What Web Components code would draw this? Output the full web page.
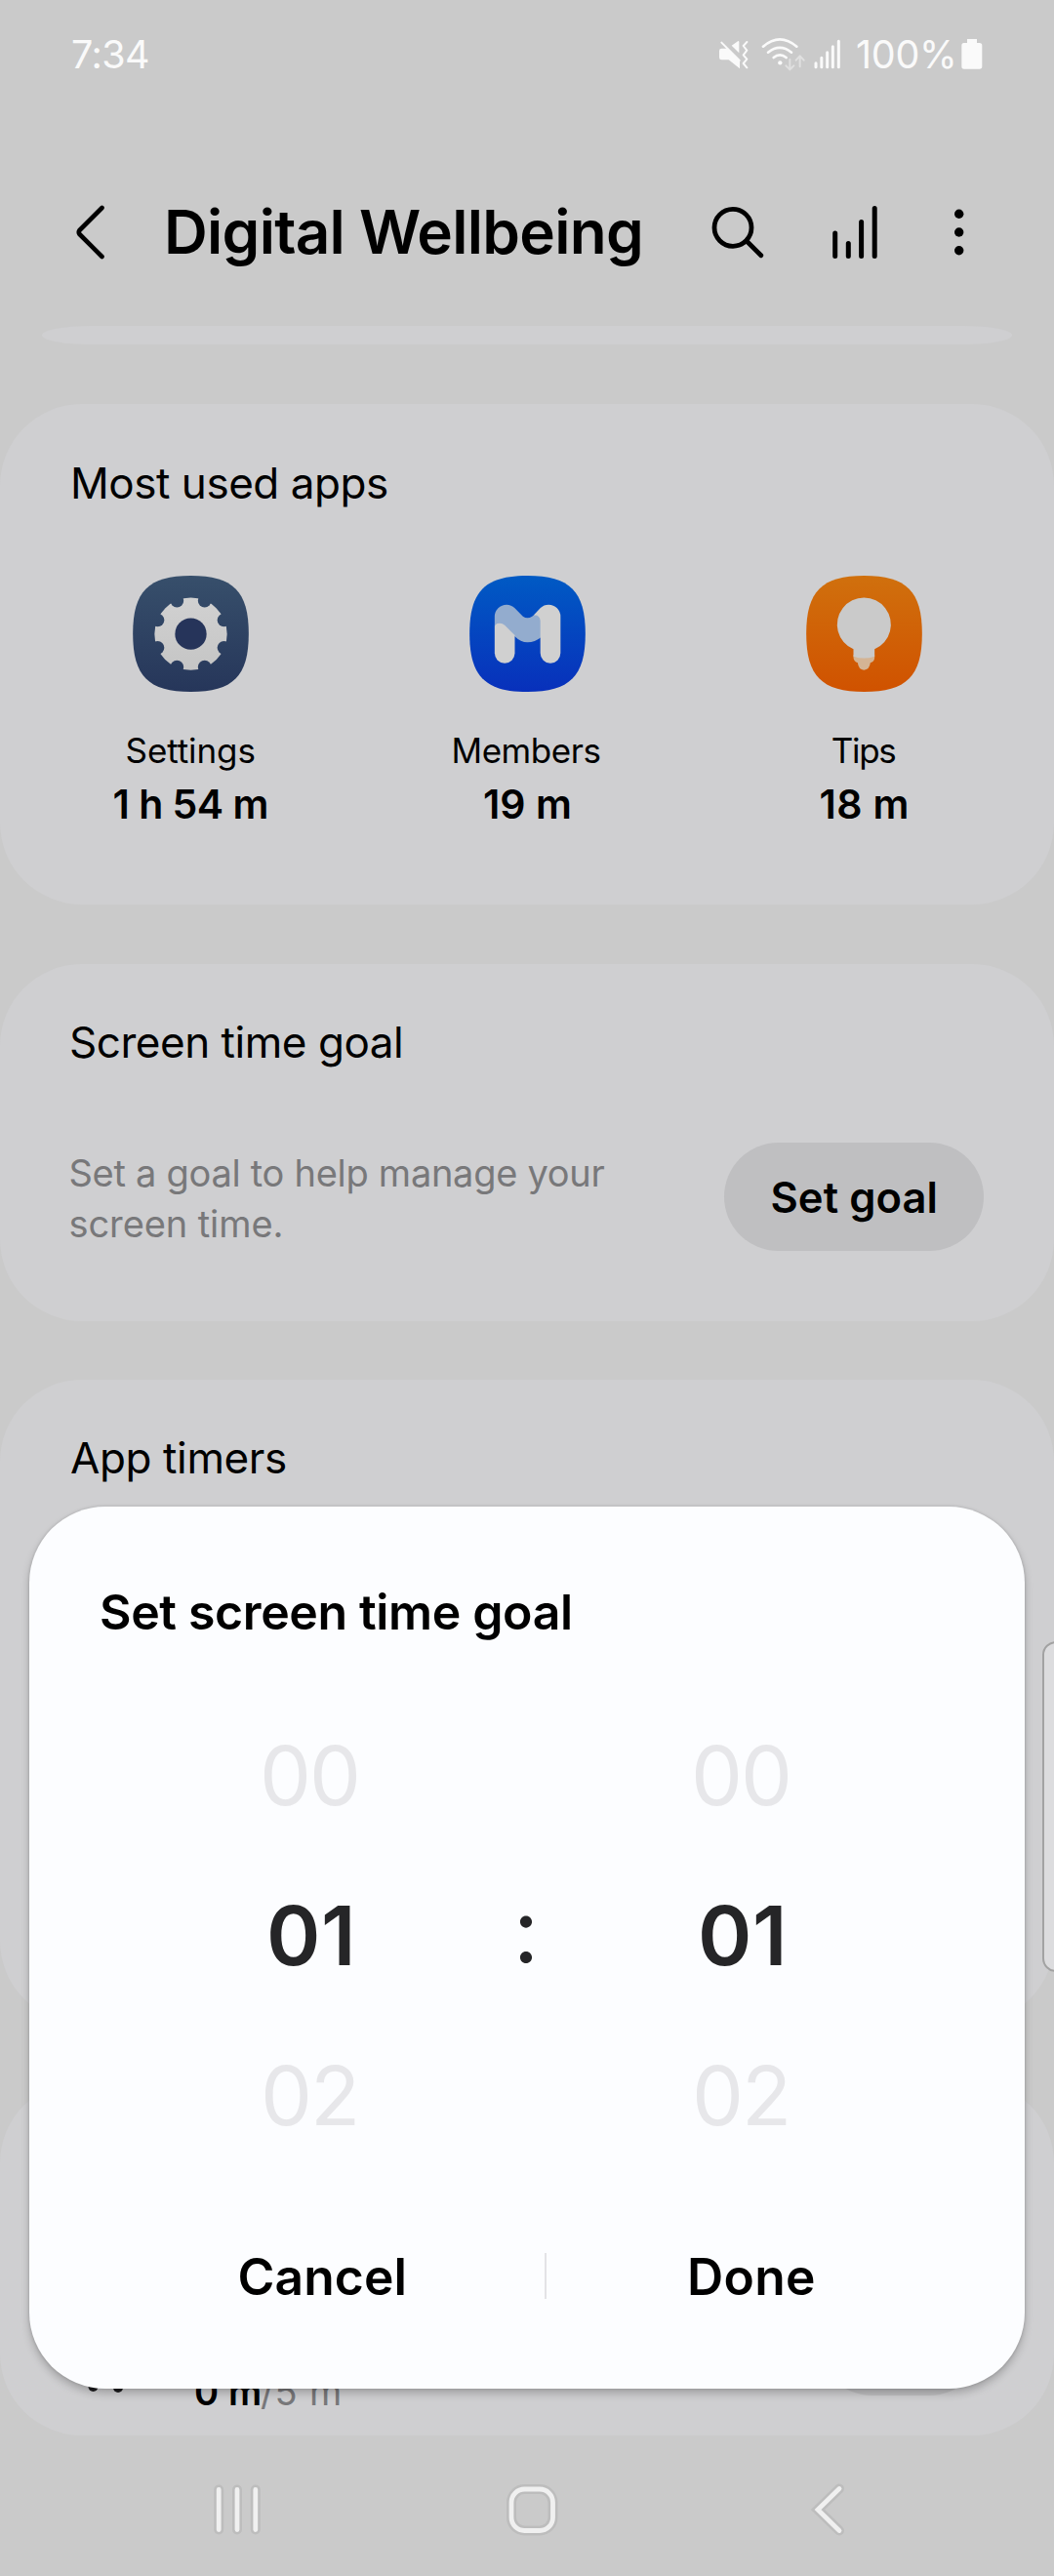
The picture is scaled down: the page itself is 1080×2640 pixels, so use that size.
<!DOCTYPE html>
<html lang="en">
<head>
<meta charset="utf-8">
<title>Digital Wellbeing</title>
<style>
html,body{margin:0;padding:0}
body{width:1080px;height:2640px;overflow:hidden;background:#cacaca;font-family:Inter,"Liberation Sans",sans-serif;color:#000}
</style>
</head>
<body>
<wellbeing-screen></wellbeing-screen>
<script>
const define = (name, html, setup) => {
  const tpl = document.createElement('template');
  tpl.innerHTML = html;
  customElements.define(name, class extends HTMLElement {
    connectedCallback() {
      if (this.shadowRoot) return;
      this.attachShadow({mode: 'open'}).append(tpl.content.cloneNode(true));
      if (setup) setup(this, this.shadowRoot);
    }
  });
};

// One line of text whose inked width is spread to the "w" attribute.
const pen = document.createElement('canvas').getContext('2d');
define('fit-text', `<style>
:host{display:block;white-space:nowrap;flex:none}
span{display:inline-block;vertical-align:top;transform:translateY(.023em)}
</style><span><slot></slot></span>`, (el, root) => {
  const cs = getComputedStyle(el), text = el.textContent, w = +el.getAttribute('w');
  pen.font = `${cs.fontWeight} ${cs.fontSize} ${cs.fontFamily}`;
  const m = pen.measureText(text);
  const ink = m.actualBoundingBoxLeft + m.actualBoundingBoxRight;
  const span = root.querySelector('span');
  el.style.width = w + 'px';
  span.style.letterSpacing = (w - ink) / (text.length - 1) + 'px';
  span.style.marginLeft = m.actualBoundingBoxLeft + 'px';
});

define('status-bar', `<style>
:host{display:flex;height:110px;align-items:center;padding:0 73px 0 74px;box-sizing:border-box;color:#fafafa;font-size:39.500px;line-height:48px}
.right{margin-left:auto;display:flex;align-items:center}
svg{display:block}
.pct{margin:0 8px 0 14px}
</style>
<fit-text w="78">7:34</fit-text>
<div class="right">
<svg width="130" height="38" viewBox="105 48 390 114" fill="#fafafa">
<path d="M121 89H140L177 126V151L143 124H121Q114 124 114 117V96Q114 89 121 89Z"/>
<path d="M152 80L171 66.500Q175 65 175 70V103Z"/>
<path d="M121 71L176 126" stroke="#fafafa" stroke-width="6" stroke-linecap="round"/>
<path d="M199 69L188 81L199 95L188 109L199 122L188 135L199 148" fill="none" stroke="#fafafa" stroke-width="6" stroke-linecap="round" stroke-linejoin="round"/>
<g fill="none" stroke="#fafafa" stroke-width="8" stroke-linecap="round">
<path d="M249 83Q300 39 352 83"/><path d="M264 101Q300 72 336 101"/><path d="M281 117Q300 101 320 117"/></g>
<circle cx="301" cy="133" r="6.500"/>
<g fill="none" stroke="#e0e0e0" stroke-width="6" stroke-linecap="round" stroke-linejoin="round">
<path d="M331 123V153M319 142L331 154L343 142M362 145V114M350 125L362 112L374 125"/></g>
<g stroke="#fafafa" stroke-width="9" stroke-linecap="round">
<path d="M411 134V146M428.500 118V146M446 101V146M463 83V146M481 67V146"/></g>
</svg>
<fit-text class="pct" w="99">100%</fit-text>
<svg width="22" height="31" viewBox="0 0 66 93"><path d="M18 0H48V12H56Q64 12 64 20V84Q64 92 56 92H8Q1 92 1 84V20Q1 12 8 12H18Z" fill="#fafafa"/></svg>
</div>`);

define('app-header', `<style>
:host{display:flex;height:224px;padding:32px 0 0 77px;box-sizing:border-box;align-items:center}
fit-text{font-size:62px;font-weight:600;line-height:76px;margin:-2px 0 0 63px}
svg{display:block;flex:none}
.a{margin-left:70px}.b{margin-left:67px}.c{margin-left:75px}
</style>
<svg width="32" height="60" viewBox="78 208 32 60" fill="none" stroke="#000" stroke-width="4.600" stroke-linecap="round" stroke-linejoin="round"><path d="M105.500 213L82.500 236Q81 238 82.500 240L105.500 263"/></svg>
<fit-text w="484">Digital Wellbeing</fit-text>
<svg class="a" width="60" height="60" viewBox="726 208 60 60" fill="none" stroke="#000" stroke-width="4.800" stroke-linecap="round"><circle cx="751" cy="233.300" r="19"/><path d="M765.500 247.500L779.800 261.800"/></svg>
<svg class="b" width="48" height="60" viewBox="853 208 48 60" stroke="#000" stroke-width="5" stroke-linecap="round"><path d="M855.700 239V262.500M869.300 249.500V262.500M882.600 227.500V262.500M896.200 213.500V262.500"/></svg>
<svg class="c" width="14" height="60" viewBox="976 208 14 60"><circle cx="982.700" cy="219.200" r="4.700"/><circle cx="982.700" cy="238" r="4.700"/><circle cx="982.700" cy="256.700" r="4.700"/></svg>`);

define('round-card', `<style>
:host{display:block;box-sizing:border-box;background:#cfcfd1;border-radius:84px;padding-top:50px}
::slotted([slot=title]){font-size:44px;line-height:58px;margin-left:73px}
</style><slot name="title"></slot><slot></slot>`);

define('app-usage', `<style>
:host{display:flex;flex-direction:column;align-items:center;width:345px}
::slotted(svg){display:block;width:119px;height:119px;overflow:visible}
::slotted([slot=name]){font-size:35px;line-height:46px;margin-top:36px}
::slotted([slot=time]){font-size:41px;line-height:54px;font-weight:600;margin-top:5px}
</style><slot></slot><slot name="name"></slot><slot name="time"></slot>`);

define('pill-button', `<style>
:host{display:flex;align-items:center;justify-content:center;width:266px;height:111px;border-radius:56px;background:#bfbfc1;font-size:43.500px;font-weight:600;line-height:56px;padding-bottom:2px;box-sizing:border-box;flex:none}
</style><slot></slot>`);

define('number-wheel', `<style>
:host{display:flex;flex-direction:column;align-items:center;font-size:84px;line-height:164px;color:#e7e7ea;width:200px}
.on{color:#252527;font-weight:600}
</style>
<fit-text w="94">00</fit-text><fit-text class="on" w="82">01</fit-text><fit-text w="92">02</fit-text>`);

define('goal-dialog', `<style>
:host{display:flex;flex-direction:column;width:1020px;height:904px;box-sizing:border-box;padding-top:77px;border-radius:78px;background:#fcfdff;box-shadow:0 5px 9px rgba(0,0,0,.22),0 0 3px rgba(0,0,0,.16)}
.title{font-size:50px;font-weight:600;line-height:60px;margin-left:74px}
.wheels{display:flex;margin:55px 0 0 188px;align-items:center}
.colon{width:242px;text-align:center;font-size:92px;line-height:156px;padding-bottom:8px;color:#252527}
.actions{display:flex;align-items:center;margin:73px 0 0 71px;font-size:51.500px;font-weight:600;line-height:62px}
.actions>div{display:flex;justify-content:center}
.x{width:457px}.y{width:421px}
i{width:2px;height:47px;background:#e3e3e6}
</style>
<fit-text class="title" w="480">Set screen time goal</fit-text>
<div class="wheels"><number-wheel></number-wheel><div class="colon">:</div><number-wheel></number-wheel></div>
<div class="actions"><div class="x"><fit-text w="168">Cancel</fit-text></div><i></i><div class="y"><fit-text w="127">Done</fit-text></div></div>`);

define('nav-bar', `<style>
:host{display:block;padding-top:44px}
svg{display:block}
</style>
<svg width="1080" height="64" viewBox="0 2540 1080 64" fill="none" stroke-linecap="round" stroke-linejoin="miter">
<defs><g id="n"><path d="M224.200 2551.500V2592.500M243 2551.500V2592.500M261.800 2551.500V2592.500"/><rect x="524" y="2551" width="42.500" height="42.500" rx="13.500"/><path d="M860 2550.500L838 2572L860 2593.500"/></g></defs>
<use href="#n" stroke="#bdbdbd" stroke-width="10"/><use href="#n" stroke="#f0f0f0" stroke-width="4.800"/></svg>`);

define('wellbeing-screen', `<style>
:host{display:block;position:relative;width:1080px;height:2640px;overflow:hidden}
.strip{height:19px;margin:0 43px;background:#cfcfd1;border-radius:50px/9.500px}
round-card{margin-bottom:60px}
.most{height:513px;margin:61px 0 61px;padding-top:51px}
.most>[slot=title]{margin-left:75px}
.apps{display:flex;justify-content:center;margin-top:67px}
.goal{height:366px}
.timers{height:659px}
.last{height:363px;margin-bottom:0}
.row{display:flex;align-items:center;justify-content:space-between;padding:0 72px 0 72.500px;margin-top:75px}
.desc{font-size:38px;line-height:52px;color:#78787a}
.bottom{display:flex;padding:0 72px 0 80px;margin-top:161px}
.bottom svg{display:block}
.limit{display:flex;font-size:38px;line-height:44px;margin:84px 0 0 60px}
.limit .g{color:#78787a;margin-left:1px}
.bottom pill-button{width:170px;margin-left:auto}
goal-dialog{position:absolute;left:30px;top:1544px}
.edge{position:absolute;left:1067.500px;top:1681.500px;width:30px;height:335px;border:2.500px solid #a2a2a2;border-radius:14px;background:#dcdcde}
</style>
<status-bar></status-bar>
<app-header></app-header>
<div class="strip"></div>
<round-card class="most"><fit-text slot="title" style="margin-left:75px" w="322">Most used apps</fit-text>
<div class="apps">
<app-usage>
<svg viewBox="107 61 356 357"><defs><linearGradient id="s" gradientUnits="userSpaceOnUse" x1="0" y1="61" x2="0" y2="418"><stop stop-color="#374f6b"/><stop offset="1" stop-color="#26365a"/></linearGradient><linearGradient id="sg" x2="0" y2="1"><stop stop-color="#d1d1d1"/><stop offset="1" stop-color="#c5c5c5"/></linearGradient></defs>
<path fill="url(#s)" d="M285 61C415 61 463 109 463 239.500C463 370 415 418 285 418C155 418 107 370 107 239.500C107 109 155 61 285 61Z"/>
<circle cx="285" cy="240" r="111.500" fill="url(#sg)"/>
<g fill="url(#s)"><circle cx="242.500" cy="138" r="20.500"/><circle cx="327.500" cy="138" r="20.500"/><circle cx="387" cy="197.500" r="20.500"/><circle cx="387" cy="282.500" r="20.500"/><circle cx="327.500" cy="342" r="20.500"/><circle cx="242.500" cy="342" r="20.500"/><circle cx="183" cy="282.500" r="20.500"/><circle cx="183" cy="197.500" r="20.500"/></g>
<circle cx="285" cy="240" r="48.500" fill="#26345a"/></svg>
<fit-text slot="name" w="131">Settings</fit-text><fit-text slot="time" w="157">1 h 54 m</fit-text></app-usage>
<app-usage>
<svg viewBox="1142 61 356 357"><defs><linearGradient id="m" x2="0" y2="1"><stop stop-color="#005ac4"/><stop offset="1" stop-color="#0830bb"/></linearGradient></defs>
<path fill="url(#m)" d="M1320 61C1450 61 1498 109 1498 239.500C1498 370 1450 418 1320 418C1190 418 1142 370 1142 239.500C1142 109 1190 61 1320 61Z"/>
<path fill="#93acce" d="M1219 187A37 37 0 0 1 1256 150Q1270 150 1281 161L1306 186Q1320 196 1334 186L1342 181Q1362 178 1362 200V250Q1343 266 1320 266Q1299 266 1281 248L1219 217Z"/>
<path fill="#d0d0d0" d="M1219 217Q1221 207 1235 207Q1243 207 1250 213L1281 244V299A31 31 0 0 1 1219 299Z"/>
<path fill="#d0d0d0" d="M1338 183L1360 160Q1370 150 1385 150A36.500 36.500 0 0 1 1421.500 187V299A31 31 0 0 1 1359.500 299V200Q1358 181 1338 183Z"/></svg>
<fit-text slot="name" w="149">Members</fit-text><fit-text slot="time" w="88">19 m</fit-text></app-usage>
<app-usage>
<svg viewBox="137 61 356 357"><defs><linearGradient id="t" x2="0" y2="1"><stop stop-color="#d0700d"/><stop offset="1" stop-color="#d05200"/></linearGradient></defs>
<path fill="url(#t)" d="M315 61C445 61 493 109 493 239.500C493 370 445 418 315 418C185 418 137 370 137 239.500C137 109 185 61 315 61Z"/>
<path fill="#d4b494" d="M282 305H347V313Q346 326 334 329Q331 351 314 351Q298 351 295 329Q283 325 282 313Z"/>
<path fill="#cacaca" d="M282 287A82.500 82.500 0 1 1 347 287V309Q315 320 282 309Z"/></svg>
<fit-text slot="name" w="64.500">Tips</fit-text><fit-text slot="time" w="89">18 m</fit-text></app-usage>
</div></round-card>
<round-card class="goal"><fit-text slot="title" w="338">Screen time goal</fit-text>
<div class="row"><div class="desc"><fit-text w="547">Set a goal to help manage your</fit-text><fit-text w="215">screen time.</fit-text></div><pill-button><fit-text w="167">Set goal</fit-text></pill-button></div></round-card>
<round-card class="timers"><fit-text slot="title" w="220">App timers</fit-text></round-card>
<round-card class="last"><div class="bottom">
<svg width="60" height="111" viewBox="80 2344 60 111" fill="#1c1c1e"><circle cx="95.500" cy="2446" r="5"/><circle cx="121" cy="2447" r="5"/></svg>
<div class="limit"><fit-text style="font-weight:600" w="66">0 m</fit-text><fit-text class="g" w="81">/5 m</fit-text></div><pill-button></pill-button></div></round-card>
<nav-bar></nav-bar>
<div class="edge"></div>
<goal-dialog></goal-dialog>`);
</script>
</body>
</html>
